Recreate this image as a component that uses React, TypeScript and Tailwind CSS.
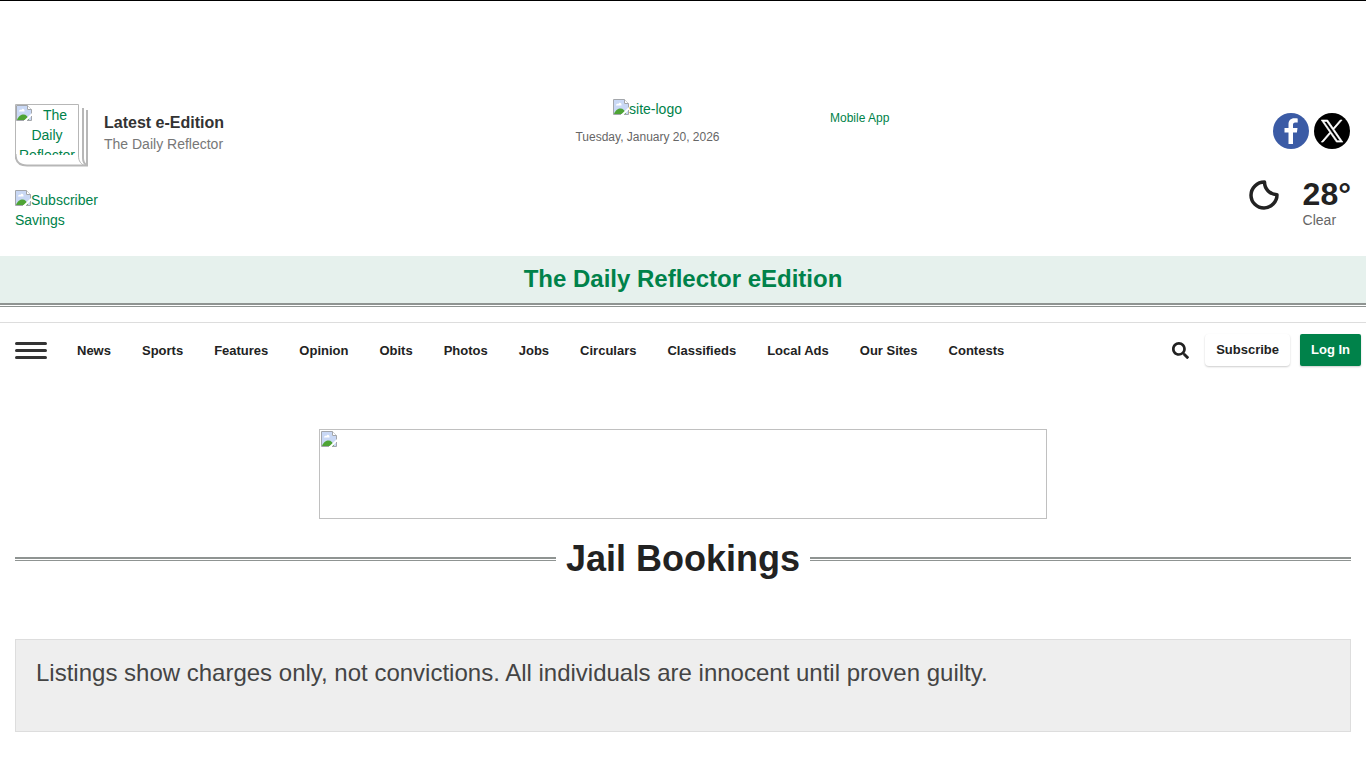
import { FaSearch } from "react-icons/fa";

const navItems = [
  "News",
  "Sports",
  "Features",
  "Opinion",
  "Obits",
  "Photos",
  "Jobs",
  "Circulars",
  "Classifieds",
  "Local Ads",
  "Our Sites",
  "Contests",
];

export default function App() {
  return (
    <div className="min-h-screen border-t border-black bg-white font-['Liberation_Sans',Arial,sans-serif] text-sm leading-5 text-[#222]">
      <Header />
      <EditionBanner />
      <NavBar />
      <main className="px-[15px] pb-9">
        <a
          href="#ad"
          aria-label="Advertisement"
          className="mx-auto mt-13 flex h-[90px] w-full max-w-[728px] items-start border border-[#c0c0c0] p-px"
        >
          <BrokenImage />
        </a>
        <div className="mt-4 flex items-center gap-2.5">
          <DoubleRule className="flex-1" />
          <h1 className="text-4xl leading-12 font-bold">Jail Bookings</h1>
          <DoubleRule className="flex-1" />
        </div>
        <section className="mt-14 border border-[#ddd] bg-[#eee] px-5 pt-[15px] pb-10">
          <p className="text-2xl leading-9 text-[#444]">
            Listings show charges only, not convictions. All individuals are
            innocent until proven guilty.
          </p>
        </section>
      </main>
    </div>
  );
}

const Header = () => {
  return (
    <header className="px-[15px] pt-[98px] pb-[26px]">
      <div className="grid grid-cols-[465fr_335fr_536fr] items-start">
        <div className="flex items-start gap-4 pt-[5px]">
          <a href="#edition" className="relative h-[63px] w-[73px] shrink-0">
            <PageStack />
            <span className="relative block h-[51px] w-16 overflow-hidden px-px pt-px text-center text-[#00824a]">
              <BrokenImage className="float-left" />
              The Daily Reflector
            </span>
          </a>
          <div className="pt-2">
            <h2 className="text-base leading-[22px] font-bold text-[#333]">
              <a href="#edition">Latest e-Edition</a>
            </h2>
            <p className="text-[#777]">The Daily Reflector</p>
          </div>
        </div>
        <div className="flex flex-col items-center gap-2.5">
          <a href="#home" className="flex text-[#00824a]">
            <BrokenImage />
            site-logo
          </a>
          <p className="text-xs text-[#666]">Tuesday, January 20, 2026</p>
        </div>
        <div className="flex items-start justify-between pt-2.5 pr-px pl-[15px]">
          <a href="#app" className="text-xs leading-[18px] text-[#00824a]">
            Mobile App
          </a>
          <div className="flex gap-[5px] pt-1">
            <a
              href="#facebook"
              aria-label="Facebook"
              className="flex size-9 items-center justify-center rounded-full bg-[#3b5ba5] text-white"
            >
              <FacebookIcon />
            </a>
            <a
              href="#x"
              aria-label="X"
              className="flex size-9 items-center justify-center rounded-full bg-black text-white"
            >
              <XIcon />
            </a>
          </div>
        </div>
      </div>
      <div className="mt-[5px] flex items-start justify-between">
        <a href="#savings" className="mt-[18px] block w-24 text-[#00824a]">
          <BrokenImage className="float-left" />
          Subscriber Savings
        </a>
        <a href="#weather" className="mt-2 flex items-start gap-6">
          <MoonIcon />
          <span className="flex flex-col gap-0.5">
            <span className="text-[32px] leading-7 font-bold">28°</span>
            <span className="text-[#666]">Clear</span>
          </span>
        </a>
      </div>
    </header>
  );
};

const EditionBanner = () => {
  return (
    <div>
      <div className="bg-[#e6f1ed] pt-2 pb-[9px] text-center">
        <a
          href="#eedition"
          className="text-2xl leading-[30px] font-bold text-[#00824a]"
        >
          The Daily Reflector eEdition
        </a>
      </div>
      <DoubleRule />
    </div>
  );
};

const NavBar = () => {
  return (
    <nav className="mt-[15px] flex items-center border-t border-[#ddd] py-2.5 pr-[5px] pl-[15px] text-[13px] font-bold">
      <div className="flex items-center gap-[30px] pt-px">
        <button
          type="button"
          aria-label="Menu"
          className="flex w-8 flex-col gap-1 py-2"
        >
          <span className="h-[3px] rounded-sm bg-[#333]" />
          <span className="h-[3px] rounded-sm bg-[#333]" />
          <span className="h-[3px] rounded-sm bg-[#333]" />
        </button>
        <ul className="flex gap-[31px]">
          {navItems.map((item) => (
            <li key={item}>
              <a href={`#${item}`}>{item}</a>
            </li>
          ))}
        </ul>
      </div>
      <div className="ml-auto flex items-center">
        <button type="button" aria-label="Search" className="mr-4">
          <FaSearch className="size-[17px]" />
        </button>
        <a
          href="#subscribe"
          className="mr-2.5 rounded-sm px-[11px] py-1.5 shadow-[0_1px_2px_rgba(0,0,0,0.2)]"
        >
          Subscribe
        </a>
        <a
          href="#login"
          className="rounded-xs bg-[#00824a] px-[11px] py-1.5 text-white shadow-[0_1px_2px_rgba(0,0,0,0.2)]"
        >
          Log In
        </a>
      </div>
    </nav>
  );
};

const DoubleRule = ({ className = "" }: { className?: string }) => (
  <div
    className={`h-1 border-t-2 border-b border-[#8f9492] bg-white ${className}`}
  />
);

const BrokenImage = ({ className = "" }: { className?: string }) => (
  <svg
    viewBox="0 0 16 16"
    aria-hidden="true"
    className={`size-4 shrink-0 ${className}`}
  >
    <path d="M.5 .5H11.5L15.5 4.500V15.500H.5Z" fill="#fff" />
    <path d="M1 1H11V5H15V15H1Z" fill="#c9d8f5" />
    <path d="M3 6.500C3 4.500 5 4.500 5.500 5C6 3 9 3.500 8.500 6.500Z" fill="#fff" />
    <path d="M1 15C2.500 11 5 9.500 7.500 9.500C10 9.500 12 11.500 13 15Z" fill="#4ea435" />
    <path d="M7.500 16L16 8V10.500L10.500 16Z" fill="#fff" />
    <path d="M15.500 8.500V4.500L11.500 .5H.5V15.500H8" fill="none" stroke="#a3a6ab" />
    <path d="M11.500 .5V4.500H15.500" fill="#fff" stroke="#a3a6ab" />
    <path d="M11 15.500H15.500V11" fill="none" stroke="#a3a6ab" />
  </svg>
);

// folded newspaper pages behind the thumbnail
const PageStack = () => (
  <svg
    viewBox="0 0 73 63"
    aria-hidden="true"
    className="absolute inset-0 h-[63px] w-[73px]"
    fill="none"
    stroke="#b7b7b7"
  >
    <path d="M.5 52V.5H63.500V52C63.500 57 66 60.500 70 61.500" />
    <path d="M.5 50C.5 57 4 61.500 12 61.500H73" strokeWidth="2" />
    <path d="M68 4V54C68 58 69.500 60 72 61.500" strokeWidth="2" />
    <path d="M72 6V62" strokeWidth="2" />
  </svg>
);

const FacebookIcon = () => (
  <svg viewBox="0 0 36 36" aria-hidden="true" className="size-9" fill="currentColor">
    <path d="M15.500 31V19.500H11.500V15H15.500V11.500C15.500 7.500 17.700 5.300 21.300 5.300C22.800 5.300 24 5.400 24.700 5.500V9.500H22.300C20.500 9.500 20 10.400 20 12V15H24.500L23.900 19.500H20V31Z" />
  </svg>
);

const XIcon = () => (
  <svg
    viewBox="0 0 24 24"
    aria-hidden="true"
    className="size-6 overflow-visible"
    fill="currentColor"
    stroke="currentColor"
    strokeWidth=".7"
  >
    <path
      transform="translate(1 1) scale(.92)"
      d="M14.234 10.162 22.977 0h-2.072l-7.591 8.824L7.251 0H.258l9.168 13.343L.258 24H2.330l8.016-9.318L16.749 24h6.993zm-2.837 3.299-.929-1.329L3.076 1.560h3.182l5.965 8.532.929 1.329 7.754 11.090h-3.182z"
    />
  </svg>
);

const MoonIcon = () => (
  <svg
    viewBox="0 0 30 30"
    aria-hidden="true"
    className="size-[30px]"
    fill="none"
    stroke="currentColor"
    strokeWidth="3.500"
    strokeLinejoin="round"
  >
    <path d="M15.500 2C8 2 2 8 2 15.200S8 28 15 28S28 22 28 14.700C21 14.500 15.500 9 15.500 2Z" />
  </svg>
);
